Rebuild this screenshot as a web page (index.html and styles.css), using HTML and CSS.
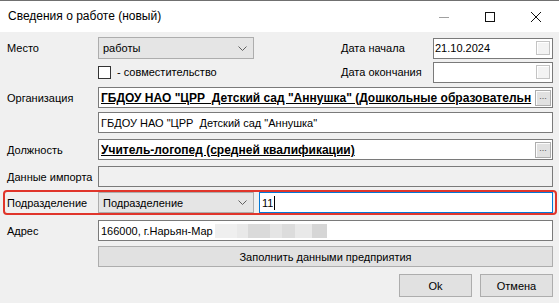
FILE: index.html
```html
<!DOCTYPE html>
<html lang="ru">
<head>
  <meta charset="UTF-8">
  <title>Сведения о работе (новый)</title>
  <link rel="stylesheet" href="styles.css">
</head>
<body>
  <div class="window">
    <div class="titlebar">
      <span class="title">Сведения о работе (новый)</span>
      <div class="controls">
        <span class="ctl"><svg width="12" height="12" viewBox="0 0 12 12"><path d="M1 6.5h10" stroke="#a0a0a0" stroke-width="1"/></svg></span>
        <span class="ctl"><svg width="12" height="12" viewBox="0 0 12 12"><rect x="1.5" y="1.5" width="9" height="9" fill="none" stroke="#111" stroke-width="1"/></svg></span>
        <span class="ctl"><svg width="12" height="12" viewBox="0 0 12 12"><path d="M1 1l10 10M11 1L1 11" stroke="#111" stroke-width="1"/></svg></span>
      </div>
    </div>

    <div class="content">
      <div class="row r1">
        <span class="label">Место</span>
        <div class="combo"><span>работы</span><svg class="chev" width="9" height="5" viewBox="0 0 9 5"><path d="M0.5 0.5l4 4 4-4" fill="none" stroke="#606060"/></svg></div>
        <span class="date-label">Дата начала</span>
        <div class="date"><span>21.10.2024</span><i class="date-btn"></i></div>
      </div>

      <div class="row r2">
        <span class="label"></span>
        <label class="check"><i class="box"></i> - совместительство</label>
        <span class="date-label">Дата окончания</span>
        <div class="date"><span></span><i class="date-btn"></i></div>
      </div>

      <div class="row r3">
        <span class="label">Организация</span>
        <div class="field bold"><span class="clip">ГБДОУ НАО "ЦРР&nbsp; Детский сад "Аннушка" (Дошкольные образовательн</span><i class="dots">...</i></div>
      </div>

      <div class="row r4">
        <span class="label"></span>
        <div class="field"><span class="clip">ГБДОУ НАО "ЦРР&nbsp; Детский сад "Аннушка"</span></div>
      </div>

      <div class="row r5">
        <span class="label">Должность</span>
        <div class="field bold"><span class="clip">Учитель-логопед (средней квалификации)</span><i class="dots">...</i></div>
      </div>

      <div class="row r6">
        <span class="label">Данные импорта</span>
        <div class="field disabled"></div>
      </div>

      <div class="row r7 highlight">
        <span class="label">Подразделение</span>
        <div class="combo"><span>Подразделение</span><svg class="chev" width="9" height="5" viewBox="0 0 9 5"><path d="M0.5 0.5l4 4 4-4" fill="none" stroke="#606060"/></svg></div>
        <div class="field focus"><span class="clip">11</span><i class="caret"></i></div>
      </div>

      <div class="row r8">
        <span class="label">Адрес</span>
        <div class="field"><span class="clip">166000, г.Нарьян-Мар</span>
          <span class="blur">
            <i style="width:22px;background:#efefef"></i><i style="width:11px;background:#e9e9e9"></i><i style="width:22px;background:#dadada"></i><i style="width:12px;background:#e5e5e5"></i><i style="width:13px;background:#dcdcdc"></i><i style="width:17px;background:#e9e9e9"></i><i style="width:15px;background:#d6d6d6"></i>
          </span>
        </div>
      </div>

      <div class="row r9">
        <span class="label"></span>
        <button class="btn wide">Заполнить данными предприятия</button>
      </div>

      <div class="row r10">
        <button class="btn">Ok</button>
        <button class="btn">Отмена</button>
      </div>
    </div>
  </div>
</body>
</html>
```

FILE: styles.css
```css
body {
  margin: 0;
  font-family: 'Liberation Sans', Arial, sans-serif;
  font-size: 11px;
  color: #000;
  background: #f0f0f0;
}
.window {
  width: 559px;
  height: 303px;
  border-top: 1px solid #707070;
  box-sizing: border-box;
  background: #f0f0f0;
  overflow: hidden;
}
.titlebar {
  height: 31px;
  background: #fff;
  display: flex;
  align-items: center;
  justify-content: space-between;
}
.title {
  margin-left: 8px;
  font-size: 12px;
  margin-top: -1px;
}
.controls {
  display: flex;
}
.ctl {
  width: 46px;
  display: flex;
  justify-content: center;
  align-items: center;
}
.content {
  padding: 5px 6px 0 7px;
}
.row {
  display: flex;
  align-items: center;
  height: 21px;
  white-space: nowrap;
}
.r1 { height: 22px; }
.r2 { margin-top: 3px; height: 20px; }
.r3 { margin-top: 5px; }
.r4 { margin-top: 4px; }
.r5 { margin-top: 6px; }
.r6 { margin-top: 6px; }
.r7 { margin-top: 5px; }
.r8 { margin-top: 7px; }
.r9 { margin-top: 5px; }
.r10 { margin-top: 7px; height: 23px; justify-content: flex-end; gap: 8px; }
.label {
  width: 91px;
  flex-shrink: 0;
}
.combo {
  width: 156px;
  height: 21px;
  box-sizing: border-box;
  background: #e5e5e5;
  border: 1px solid #adadad;
  display: flex;
  align-items: center;
  justify-content: space-between;
  padding: 0 6px 0 4px;
  flex-shrink: 0;
}
.r1 .combo { height: 22px; }
.date-label {
  margin-left: 87px;
  width: 92px;
}
.date {
  width: 120px;
  height: 21px;
  box-sizing: border-box;
  background: #fff;
  border: 1px solid #7a7a7a;
  display: flex;
  align-items: center;
  justify-content: space-between;
  padding: 0 2px 0 1px;
}
.date-btn {
  width: 14px;
  height: 14px;
  box-sizing: border-box;
  border: 1px solid #c4c4c4;
  background: #f3f3f3;
  box-shadow: inset 1px 1px 0 #fff;
}
.check {
  display: flex;
  align-items: center;
  gap: 6px;
  width: 156px;
}
.box {
  width: 13px;
  height: 13px;
  box-sizing: border-box;
  border: 1px solid #333;
  background: #fff;
}
.field {
  flex: 1;
  height: 21px;
  box-sizing: border-box;
  background: #fff;
  border: 1px solid #7a7a7a;
  display: flex;
  align-items: center;
  padding: 0 1px 0 2px;
  overflow: hidden;
}
.field.bold .clip {
  font-weight: bold;
  font-size: 12px;
  text-decoration: underline;
}
.clip {
  flex: 1;
  min-width: 0;
  white-space: nowrap;
  overflow: hidden;
}
.field.disabled {
  background: #f0f0f0;
}
.field.focus {
  margin-left: 5px;
  border-color: #0078d7;
}
.field.focus .clip {
  flex: none;
}
.caret {
  width: 1px;
  height: 14px;
  background: #000;
  margin-left: 1px;
}
.dots {
  width: 16px;
  height: 16px;
  flex-shrink: 0;
  box-sizing: border-box;
  border: 1px solid #adadad;
  background: #e1e1e1;
  box-shadow: inset 1px 1px 0 #fcfcfc;
  font-style: normal;
  font-size: 9px;
  color: #555;
  text-align: center;
  line-height: 11px;
}
.r8 .clip { flex: none; }
.blur {
  display: flex;
  height: 14px;
  margin-left: 2px;
}
.blur i { display: block; height: 14px; }
.highlight {
  position: relative;
}
.highlight::before {
  content: '';
  position: absolute;
  left: -4px;
  right: -4px;
  top: -2px;
  bottom: -2px;
  border: 2px solid #e0352b;
  border-radius: 4px;
  pointer-events: none;
}
.btn {
  font-family: inherit;
  font-size: 11px;
  background: #e1e1e1;
  border: 1px solid #adadad;
  height: 21px;
  padding: 0;
  color: #000;
}
.btn.wide { flex: 1; }
.r10 .btn { width: 73px; height: 23px; }
```
